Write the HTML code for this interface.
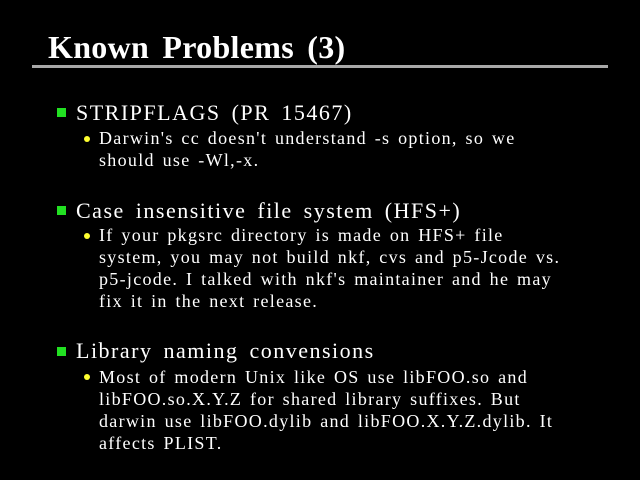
<!DOCTYPE html>
<html><head><style>
body{margin:0;width:640px;height:480px;background:#000;overflow:hidden;position:relative;font-family:"Liberation Serif",serif;color:#fff}
div{position:absolute;white-space:nowrap;line-height:1}
.t{left:48px;top:31px;font-size:32px;font-weight:bold;word-spacing:5px;letter-spacing:0.3px}
.rule{left:32px;top:65px;width:576px;height:3px;background:#a8a8a8}
.h{left:76px;font-size:22px;letter-spacing:1.5px;word-spacing:4px}
.s{left:99px;font-size:18px;letter-spacing:1.3px;word-spacing:2px}
.sq{left:57px;width:9px;height:9px;background:#22e022}
.dot{left:84px;width:6px;height:6px;border-radius:50%;background:#ffff30}
</style></head><body>
<div class="t">Known Problems (3)</div>
<div class="rule"></div>

<div class="sq" style="top:108px"></div>
<div class="h" style="top:102px">STRIPFLAGS (PR 15467)</div>
<div class="dot" style="top:136px"></div>
<div class="s" style="top:129px">Darwin's cc doesn't understand -s option, so we</div>
<div class="s" style="top:151px">should use -Wl,-x.</div>

<div class="sq" style="top:206px"></div>
<div class="h" style="top:200px">Case insensitive file system (HFS+)</div>
<div class="dot" style="top:233px"></div>
<div class="s" style="top:226px">If your pkgsrc directory is made on HFS+ file</div>
<div class="s" style="top:248px">system, you may not build nkf, cvs and p5-Jcode vs.</div>
<div class="s" style="top:270px">p5-jcode. I talked with nkf's maintainer and he may</div>
<div class="s" style="top:292px">fix it in the next release.</div>

<div class="sq" style="top:347px"></div>
<div class="h" style="top:340px">Library naming convensions</div>
<div class="dot" style="top:374px"></div>
<div class="s" style="top:368px">Most of modern Unix like OS use libFOO.so and</div>
<div class="s" style="top:390px">libFOO.so.X.Y.Z for shared library suffixes. But</div>
<div class="s" style="top:412px">darwin use libFOO.dylib and libFOO.X.Y.Z.dylib. It</div>
<div class="s" style="top:434px">affects PLIST.</div>
</body></html>
